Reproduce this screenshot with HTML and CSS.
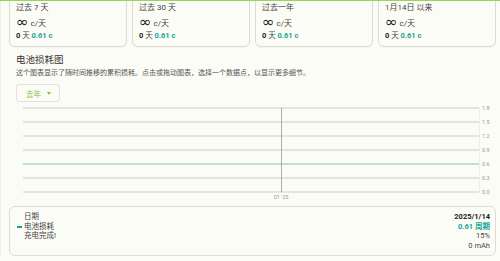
FILE: index.html
```html
<!DOCTYPE html>
<html lang="zh-CN">
<head>
  <meta charset="UTF-8">
  <title>电池损耗图</title>
  <link rel="stylesheet" href="styles.css">
</head>
<body>

  <div class="top-bar"></div>

  <div class="page">
    <div class="stat-cards">
      <div class="stat-card">
        <div class="stat-label">过去 7 天</div>
        <div class="stat-rate"><span class="inf">∞</span> c/天</div>
        <div class="stat-sub">0 <span class="unit">天</span> <span class="teal">0.61 c</span></div>
      </div>
      <div class="stat-card">
        <div class="stat-label">过去 30 天</div>
        <div class="stat-rate"><span class="inf">∞</span> c/天</div>
        <div class="stat-sub">0 <span class="unit">天</span> <span class="teal">0.61 c</span></div>
      </div>
      <div class="stat-card">
        <div class="stat-label">过去一年</div>
        <div class="stat-rate"><span class="inf">∞</span> c/天</div>
        <div class="stat-sub">0 <span class="unit">天</span> <span class="teal">0.61 c</span></div>
      </div>
      <div class="stat-card">
        <div class="stat-label">1月14日 以来</div>
        <div class="stat-rate"><span class="inf">∞</span> c/天</div>
        <div class="stat-sub">0 <span class="unit">天</span> <span class="teal">0.61 c</span></div>
      </div>
    </div>

    <div class="chart-section">
      <h3 class="chart-title">电池损耗图</h3>
      <p class="chart-desc">这个图表显示了随时间推移的累积损耗。点击或拖动图表，选择一个数据点，以显示更多细节。</p>

      <button class="range-select">去年 <span class="caret"></span></button>

      <svg class="chart" width="488" height="98" viewBox="0 0 488 98">
        <g stroke="#dcdcd4" stroke-width="1.3">
          <line x1="14" y1="4" x2="470" y2="4"/>
          <line x1="14" y1="18" x2="470" y2="18"/>
          <line x1="14" y1="32" x2="470" y2="32"/>
          <line x1="14" y1="46" x2="470" y2="46"/>
          <line x1="14" y1="74" x2="470" y2="74"/>
          <line x1="14" y1="88" x2="470" y2="88"/>
        </g>
        <line x1="470.5" y1="4" x2="470.5" y2="88" stroke="#e3f0ec" stroke-width="1"/>
        <line x1="14" y1="60" x2="470" y2="60" stroke="#a9d6d1" stroke-width="1.6"/>
        <line x1="272.5" y1="4" x2="272.5" y2="88" stroke="#9a9a96" stroke-width="0.8"/>
        <g class="axis-label" fill="#9a9a96" font-size="5.5">
          <text x="473" y="6">1.8</text>
          <text x="473" y="20">1.5</text>
          <text x="473" y="34">1.2</text>
          <text x="473" y="48">0.9</text>
          <text x="473" y="62">0.6</text>
          <text x="473" y="76">0.3</text>
          <text x="473" y="90">0.0</text>
          <text x="272" y="95" text-anchor="middle">01 '25</text>
        </g>
      </svg>
    </div>

    <div class="detail-box">
      <div class="detail-labels">
        <div>日期</div>
        <div class="series"><span class="dash"></span>电池损耗</div>
        <div>充电完成!</div>
      </div>
      <div class="detail-values">
        <div class="strong">2025/1/14</div>
        <div class="strong teal">0.61 周期</div>
        <div>15%</div>
        <div>0 mAh</div>
      </div>
    </div>
  </div>

</body>
</html>
```

FILE: styles.css
```css
body {
  margin: 0;
  background: #fcfcf6;
  font-family: Roboto, "Noto Sans", "Noto Sans CJK SC", sans-serif;
  color: #333;
  overflow: hidden;
}
.top-bar {
  position: fixed;
  top: 0;
  left: 0;
  right: 0;
  height: 1px;
  background: #9cd25c;
  z-index: 2;
}
.page {
  padding: 0 4px 0 8px;
  border-left: 1px solid #efefe8;
}
.stat-cards {
  display: grid;
  grid-template-columns: repeat(4, 1fr);
  gap: 5px;
  margin-top: -8px;
}
.stat-card {
  border: 1px solid #dcdcd4;
  border-radius: 6px;
  padding: 10px 6px 5px;
  box-shadow: 0 1px 1px rgba(0,0,0,0.04);
}
.stat-label {
  font-size: 8px;
  line-height: 10px;
  color: #444;
}
.stat-rate {
  font-size: 8px;
  color: #444;
  line-height: 14px;
  margin-top: 2px;
}
.stat-rate .inf {
  font-family: "DejaVu Sans", sans-serif;
  font-size: 15px;
  color: #222;
  vertical-align: -1px;
}
.stat-sub {
  font-size: 7.5px;
  font-weight: 700;
  color: #222;
  line-height: 10px;
}
.stat-sub .unit {
  font-weight: 400;
  color: #444;
}
.teal {
  color: #16a394;
}
.chart-section {
  padding: 0 0 0 7px;
}
.chart-title {
  margin: 6px 0 0;
  font-size: 9.5px;
  font-weight: 400;
  line-height: 14px;
  color: #333;
}
.chart-desc {
  margin: 1px 0 0;
  font-size: 7px;
  line-height: 10px;
  color: #555;
}
.range-select {
  display: flex;
  align-items: center;
  gap: 6px;
  margin-top: 6px;
  height: 18px;
  width: 44px;
  padding: 0 0 0 9px;
  background: #fcfcf6;
  border: 1px solid #e3e3dc;
  border-radius: 3px;
  font-family: inherit;
  font-size: 7.5px;
  color: #7cc443;
}
.caret {
  width: 0;
  height: 0;
  border-left: 2.5px solid transparent;
  border-right: 2.5px solid transparent;
  border-top: 3px solid #7cc443;
}
.chart {
  display: block;
  margin: 2px 0 0 -7px;
}
.axis-label text {
  font-family: Roboto, sans-serif;
}
.detail-box {
  box-sizing: border-box;
  display: flex;
  justify-content: space-between;
  margin-top: 4px;
  height: 50px;
  border: 1px solid #dcdcd4;
  border-radius: 6px;
  padding: 5px 5px 0 14px;
  font-size: 7.5px;
  line-height: 9.7px;
  color: #444;
}
.detail-labels .series {
  position: relative;
}
.dash {
  position: absolute;
  left: -7px;
  top: 4.5px;
  width: 5px;
  height: 1.5px;
  background: #16a394;
}
.detail-values {
  text-align: right;
}
.detail-values .strong {
  font-weight: 700;
  color: #222;
}
.detail-values .teal {
  color: #16a394;
}
```
